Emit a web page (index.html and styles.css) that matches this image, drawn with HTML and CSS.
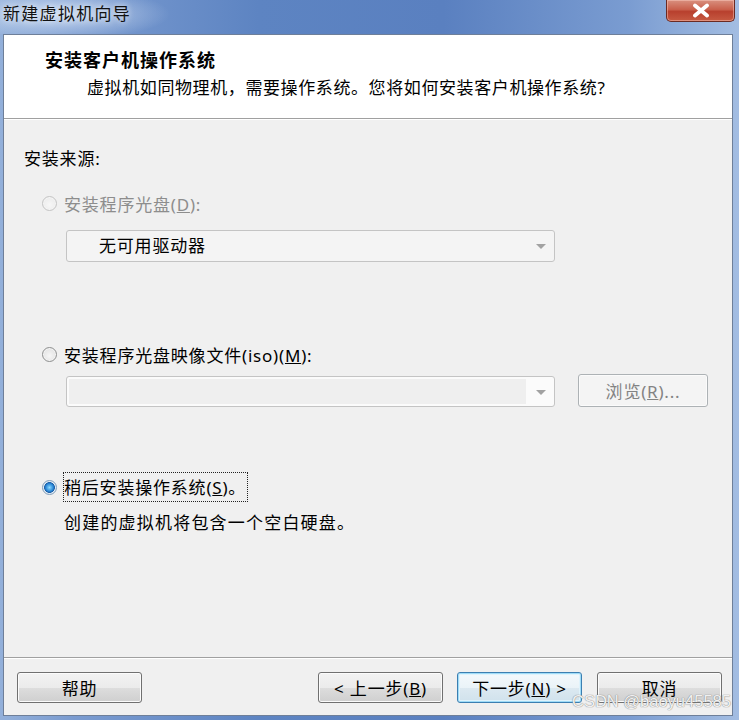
FILE: index.html
```html
<!DOCTYPE html>
<html lang="zh-CN">
<head>
    <meta charset="UTF-8">
    <meta name="viewport" content="width=device-width, initial-scale=1.0">
    <title>新建虚拟机向导</title>
    <link rel="stylesheet" href="styles.css">
</head>
<body>
    <div class="window">
        <div class="title-bar">
            <span class="title-text">新建虚拟机向导</span>
        </div>
        <button class="close-button">
            <svg width="20" height="15" viewBox="0 0 20 15">
                <path d="M4 2.5 L16 12.5 M16 2.5 L4 12.5" stroke="#ffffff" stroke-width="3.8" stroke-linecap="round"/>
            </svg>
        </button>

        <div class="client">
            <!-- page header -->
            <div class="header">
                <div class="header-title">安装客户机操作系统</div>
                <div class="header-sub">虚拟机如同物理机，需要操作系统。您将如何安装客户机操作系统?</div>
            </div>

            <div class="main">
                <div class="group-label">安装来源:</div>

                <div class="option disabled">
                    <span class="radio"></span>
                    <span class="option-label">安装程序光盘(<u>D</u>):</span>
                </div>
                <div class="combo combo-disc">
                    <span class="combo-text">无可用驱动器</span>
                    <span class="combo-arrow"></span>
                </div>

                <div class="option option-iso">
                    <span class="radio"></span>
                    <span class="option-label">安装程序光盘映像文件(iso)(<u>M</u>):</span>
                </div>
                <div class="iso-row">
                    <div class="combo combo-iso">
                        <span class="combo-edit"></span>
                        <span class="combo-arrow"></span>
                    </div>
                    <button class="win-button browse-button" disabled>浏览(<u>R</u>)...</button>
                </div>

                <div class="option option-later">
                    <span class="radio checked"></span>
                    <span class="option-label focused">稍后安装操作系统(<u>S</u>)。</span>
                </div>
                <p class="option-desc">创建的虚拟机将包含一个空白硬盘。</p>
            </div>

            <!-- wizard buttons -->
            <div class="footer">
                <button class="win-button">帮助</button>
                <div class="footer-nav">
                    <button class="win-button">&lt; 上一步(<u>B</u>)</button>
                    <button class="win-button default-button">下一步(<u>N</u>) &gt;</button>
                    <button class="win-button">取消</button>
                </div>
            </div>
        </div>

        <div class="watermark">CSDN @baoyu45585</div>
    </div>
</body>
</html>
```

FILE: styles.css
```css
body {
    margin: 0;
    background-color: #6f92c9;
    font-family: "Noto Sans", "Noto Sans CJK SC", sans-serif;
    color: #000000;
}

.window {
    position: relative;
    width: 739px;
    height: 720px;
    display: flex;
    flex-direction: column;
    background: linear-gradient(90deg, #93b0da 0%, #7a9bd0 10%, #5d84c2 35%, #5a80c0 60%, #7a9cd1 85%, #a3bde2 100%);
    overflow: hidden;
}

.title-bar {
    height: 34px;
    flex: none;
    padding-left: 3px;
    background: radial-gradient(ellipse 110px 26px at 60px 14px, rgba(225, 236, 250, 0.75), rgba(225, 236, 250, 0) 100%);
}

.title-text {
    display: inline-block;
    font-size: 17px;
    letter-spacing: 1.3px;
    line-height: 28px;
    color: #111111;
    text-shadow: 0 0 6px rgba(255, 255, 255, 0.9);
}

.close-button {
    position: absolute;
    top: 0;
    left: 666px;
    width: 69px;
    height: 22px;
    padding: 0;
    border: 1px solid #6b2a22;
    border-top: none;
    border-radius: 0 0 5px 5px;
    background: linear-gradient(#d9907f 0%, #c9604c 45%, #b8402e 55%, #c65a42 100%);
    box-shadow: inset 0 0 0 1px rgba(255, 210, 200, 0.45);
    display: flex;
    align-items: center;
    justify-content: center;
}

.client {
    flex: 1;
    display: flex;
    flex-direction: column;
    margin: 0 6px 4px 3px;
    border: 1px solid #6e7f99;
    background-color: #f0f0f0;
}

.header {
    height: 84px;
    flex: none;
    box-sizing: border-box;
    padding: 13px 0 0 41px;
    background-color: #ffffff;
    border-bottom: 1px solid #a0a0a0;
    box-shadow: 0 1px 0 #ffffff;
}

.header-title {
    font-size: 18px;
    font-weight: bold;
    letter-spacing: 1px;
    line-height: 24px;
}

.header-sub {
    margin-top: 5px;
    padding-left: 42px;
    font-size: 17px;
    letter-spacing: 0.6px;
    line-height: 22px;
}

.main {
    flex: 1;
    margin-top: 1px;
    padding: 28px 0 0 20px;
    font-size: 17px;
    letter-spacing: 0.8px;
}

.group-label {
    line-height: 22px;
}

.option {
    display: flex;
    align-items: center;
    height: 22px;
    margin-top: 22px;
    margin-left: 18px;
}

.option.disabled {
    color: #8d8d8d;
}

.option-iso {
    margin-top: 81px;
}

.option-later {
    margin-top: 69px;
}

.radio {
    width: 13px;
    height: 13px;
    margin-right: 7px;
    border: 1px solid #8e8f8f;
    border-radius: 50%;
    background: radial-gradient(circle at 50% 60%, #f6f6f6 0%, #dcdcdc 100%);
    box-shadow: inset 0 0 0 1px #f4f4f4;
}

.option.disabled .radio {
    border-color: #c4c4c4;
    background: radial-gradient(circle at 50% 60%, #f7f7f7 0%, #e8e8e8 100%);
}

.radio.checked {
    border-color: #7f9db9;
    background: radial-gradient(circle, #8fdcff 0%, #2c8ad8 40%, #1b5fa8 55%, #e6eef6 62%, #d2dce8 100%);
    box-shadow: none;
}

.option-label.focused {
    padding: 1px 1px 2px 0;
    outline: 1px dotted #222222;
}

.option-desc {
    margin: 14px 0 0 40px;
    line-height: 22px;
    letter-spacing: 1.2px;
}

.combo {
    position: relative;
    box-sizing: border-box;
    width: 489px;
    border: 1px solid #c4c4c4;
    border-radius: 3px;
}

.combo-disc {
    height: 32px;
    margin: 16px 0 0 42px;
    padding-left: 32px;
    line-height: 30px;
    background-color: #f4f4f4;
}

.combo-arrow {
    position: absolute;
    right: 8px;
    top: 50%;
    margin-top: -2px;
    border-left: 5px solid transparent;
    border-right: 5px solid transparent;
    border-top: 5px solid #a2a2a2;
}

.iso-row {
    display: flex;
    align-items: flex-start;
    margin: 9px 0 0 42px;
}

.combo-iso {
    height: 31px;
    margin-top: 2px;
    padding: 2px;
    background-color: #fbfbfb;
}

.combo-edit {
    display: block;
    width: 457px;
    height: 25px;
    background-color: #efefef;
}

.win-button {
    box-sizing: border-box;
    width: 125px;
    height: 31px;
    padding: 0;
    border: 1px solid #707070;
    border-radius: 3px;
    background: linear-gradient(#f2f2f2 0%, #ebebeb 50%, #dddddd 51%, #cfcfcf 100%);
    box-shadow: inset 0 0 0 1px #fbfbfb;
    font-family: "Noto Sans", "Noto Sans CJK SC", sans-serif;
    font-size: 17px;
    letter-spacing: 0.8px;
    color: #000000;
}

.browse-button {
    width: 130px;
    height: 33px;
    margin-left: 23px;
    border-color: #adb2b5;
    background: #f4f4f4;
    color: #838383;
}

.default-button {
    border-color: #3c7fb1;
    background: linear-gradient(#f4f9fc 0%, #eaf3f8 50%, #dce9f1 51%, #d0e2ec 100%);
    box-shadow: inset 0 0 0 1px #9fdcf8, inset 0 0 0 2px #dff3fc;
}

.footer {
    height: 58px;
    flex: none;
    box-sizing: border-box;
    display: flex;
    justify-content: space-between;
    padding: 14px 10px 0 13px;
    border-top: 1px solid #a0a0a0;
    box-shadow: inset 0 1px 0 #ffffff;
}

.footer-nav {
    display: flex;
    gap: 14px;
}

.footer-nav .win-button:last-child {
    margin-left: 1px;
}

.watermark {
    position: absolute;
    left: 572px;
    top: 690px;
    font-family: "Liberation Sans", sans-serif;
    font-size: 16.5px;
    line-height: 22px;
    color: rgba(255, 255, 255, 0.9);
    text-shadow: 0 0 1px #8a8a8a, 0 0 1px #8a8a8a;
}
```
